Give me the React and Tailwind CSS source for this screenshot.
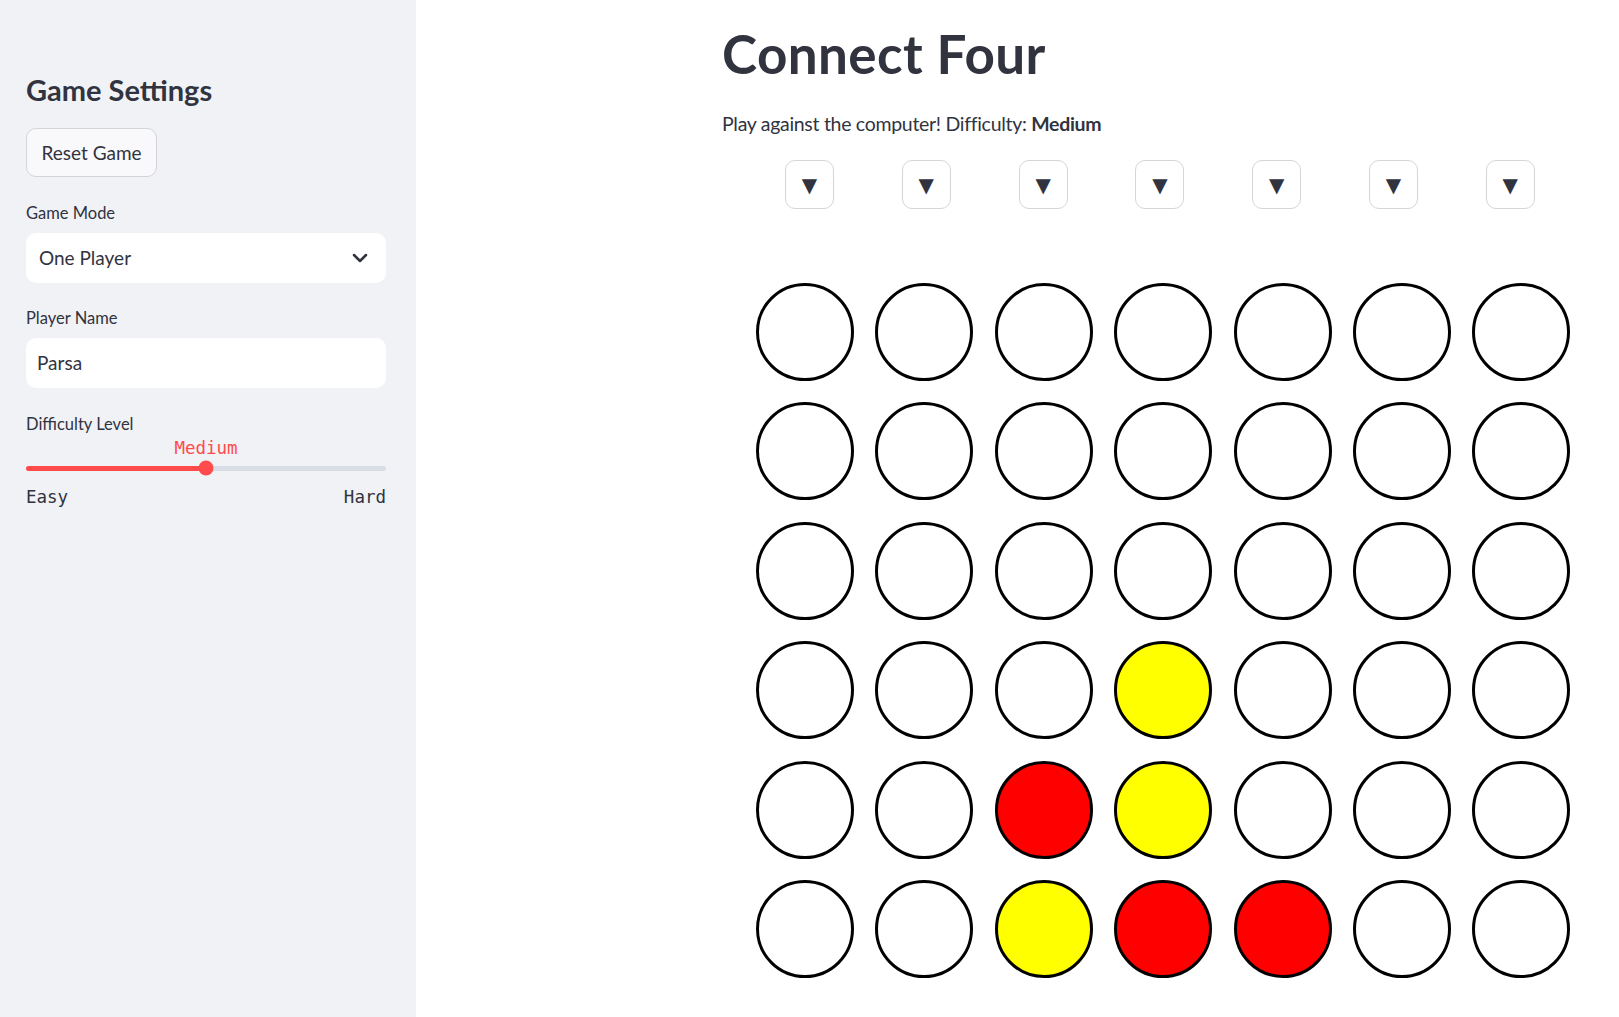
import { ChevronDown } from "lucide-react";

const board = [
  ["", "", "", "", "", "", ""],
  ["", "", "", "", "", "", ""],
  ["", "", "", "", "", "", ""],
  ["", "", "", "Y", "", "", ""],
  ["", "", "R", "Y", "", "", ""],
  ["", "", "Y", "R", "R", "", ""],
];

const sans = "font-['Lato','Open_Sans',sans-serif]";
const mono = "font-['DejaVu_Sans_Mono','Liberation_Mono',monospace]";

function Sidebar() {
  return (
    <aside className={`w-[416px] shrink-0 min-h-[1017px] bg-[#f0f2f6] pl-[26px] pr-[30px] pt-[70px] text-[#31333f] ${sans}`}>
      <h2 className="text-[29px] leading-[40px] font-bold">Game Settings</h2>

      <button className="mt-[18px] h-[49px] px-[14.5px] rounded-[10px] border border-[#d3d4d9] bg-[#f9f9fb] text-[19px] leading-none">
        Reset Game
      </button>

      <p className="mt-[24px] text-[16.5px] leading-[24px]">Game Mode</p>
      <div className="mt-[8px] h-[50px] rounded-[10px] bg-white flex items-center justify-between pl-[13px] pr-[14px]">
        <span className="text-[19px]">One Player</span>
        <ChevronDown size={24} strokeWidth={2.5} className="text-[#31333f]" />
      </div>

      <p className="mt-[23px] text-[16.5px] leading-[24px]">Player Name</p>
      <div className="mt-[8px] h-[50px] rounded-[10px] bg-white flex items-center px-[11px]">
        <span className="text-[19px]">Parsa</span>
      </div>

      <p className="mt-[24px] text-[16.5px] leading-[24px]">Difficulty Level</p>
      <p className={`mt-[2px] text-center text-[17.5px] leading-[20px] text-[#ff4b4b] ${mono}`}>Medium</p>
      <div className="relative h-[20px] flex items-center">
        <div className="h-[5px] w-full rounded-full bg-[#d9dde6] flex">
          <div className="h-full w-1/2 rounded-full bg-[#ff4b4b]" />
        </div>
        <div className="absolute left-1/2 top-1/2 -translate-x-1/2 -translate-y-1/2 w-[15px] h-[15px] rounded-full bg-[#ff4b4b]" />
      </div>
      <div className={`mt-[7px] flex justify-between text-[17.5px] leading-[24px] ${mono}`}>
        <span>Easy</span>
        <span>Hard</span>
      </div>
    </aside>
  );
}

function Cell({ v }) {
  const bg = v === "R" ? "bg-[#ff0000]" : v === "Y" ? "bg-[#ffff00]" : "bg-white";
  return <div className={`w-[98px] h-[98px] rounded-full border-[3px] border-black ${bg}`} />;
}

export default function App() {
  return (
    <div className="flex w-full min-h-[1017px] bg-white">
      <Sidebar />
      <main className={`flex-1 pl-[306px] pt-[23px] text-[#31333f] ${sans}`}>
        <h1 className="text-[53px] leading-[62px] font-bold tracking-[0.4px]">Connect Four</h1>
        <p className="mt-[27px] text-[19.5px] leading-[24px] tracking-[-0.3px]">
          Play against the computer! Difficulty: <strong className="font-bold">Medium</strong>
        </p>

        <div className="mt-[24px] pl-[63px] flex gap-[67.8px]">
          {board[0].map((_, i) => (
            <button
              key={i}
              className="w-[49px] h-[49px] rounded-[10px] border border-[#d6d6da] bg-white flex items-center justify-center text-[20px] leading-none font-['DejaVu_Sans',sans-serif]"
            >
              ▼
            </button>
          ))}
        </div>

        <div className="mt-[74px] pl-[34px] flex flex-col gap-[21.4px]">
          {board.map((row, r) => (
            <div key={r} className="flex gap-[21.4px]">
              {row.map((v, c) => (
                <Cell key={c} v={v} />
              ))}
            </div>
          ))}
        </div>
      </main>
    </div>
  );
}
